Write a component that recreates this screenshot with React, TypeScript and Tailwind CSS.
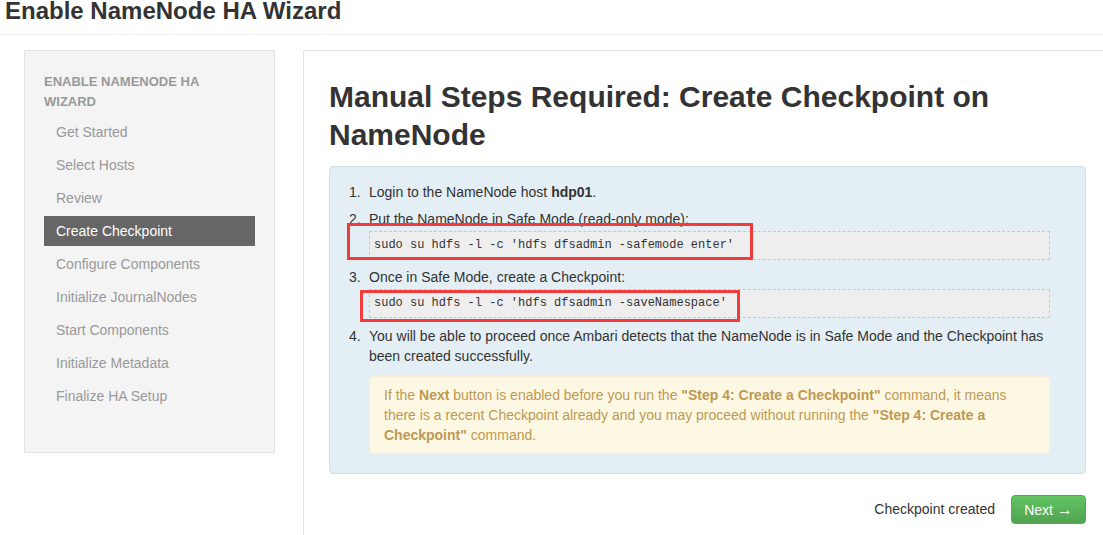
const steps = [
  'Get Started',
  'Select Hosts',
  'Review',
  'Create Checkpoint',
  'Configure Components',
  'Initialize JournalNodes',
  'Start Components',
  'Initialize Metadata',
  'Finalize HA Setup',
];

function CodeLine({ cmd, box }: { cmd: string; box: string }) {
  return (
    <div className="relative mt-[2px] border border-dashed border-[#c8c8c8] bg-[#eeeeee] px-[4px] py-[7px] font-['Liberation_Mono',monospace] text-[12px] leading-[13px] text-[#333]">
      {cmd}
      <div className={'absolute border-[3px] border-[#f23b3b] ' + box} />
    </div>
  );
}

export default function App() {
  return (
    <div className="min-h-[535px] w-full overflow-hidden bg-white font-['Liberation_Sans',Arial,sans-serif] text-[14px] text-[#333]">
      <div className="flex h-[35px] items-start border-b border-[#eeeeee] pl-[5px]">
        <h1 className="-mt-[3px] text-[24px] font-bold leading-[28px] text-[#333]">Enable NameNode HA Wizard</h1>
      </div>

      <div className="flex pt-[15px] pl-[24px]">
        <div className="h-[403px] w-[251px] shrink-0 border border-[#e3e3e3] bg-[#f4f4f4] px-[19px] pt-[21px]">
          <div className="mb-[5px] w-[190px] text-[13px] font-bold uppercase leading-[20px] text-[#999]">
            Enable NameNode HA Wizard
          </div>
          <div className="flex flex-col gap-[3px]">
            {steps.map((s) => (
              <div
                key={s}
                className={
                  s === 'Create Checkpoint'
                    ? 'h-[30px] bg-[#666] pl-[12px] leading-[30px] text-white'
                    : 'h-[30px] pl-[12px] leading-[30px] text-[#999]'
                }
              >
                {s}
              </div>
            ))}
          </div>
        </div>

        <div className="ml-[28px] min-h-[485px] flex-1 border-t border-l border-[#e3e3e3] pl-[25px] pr-[16px] pt-[27px]">
          <h2 className="text-[30px] font-bold leading-[38px] text-[#333]">
            Manual Steps Required: Create Checkpoint on NameNode
          </h2>

          <div className="mt-[12px] w-[757px] rounded-[4px] border border-[#d3dfe6] bg-[#e4eff5] pt-[15px] pb-[19px] pl-[19px] pr-[35px] leading-[20px]">
            <div className="flex">
              <span className="w-[20px] shrink-0">1.</span>
              <span>
                Login to the NameNode host <b>hdp01</b>.
              </span>
            </div>

            <div className="mt-[7px] flex">
              <span className="w-[20px] shrink-0">2.</span>
              <div className="flex-1">
                <div>Put the NameNode in Safe Mode (read-only mode):</div>
                <CodeLine cmd="sudo su hdfs -l -c 'hdfs dfsadmin -safemode enter'" box="-left-[23px] -top-[9px] h-[37px] w-[406px]" />
              </div>
            </div>

            <div className="mt-[7px] flex">
              <span className="w-[20px] shrink-0">3.</span>
              <div className="flex-1">
                <div>Once in Safe Mode, create a Checkpoint:</div>
                <CodeLine cmd="sudo su hdfs -l -c 'hdfs dfsadmin -saveNamespace'" box="-left-[10px] top-[0px] h-[32px] w-[380px]" />
              </div>
            </div>

            <div className="mt-[8px] flex">
              <span className="w-[20px] shrink-0">4.</span>
              <div className="flex-1">
                <div>
                  You will be able to proceed once Ambari detects that the NameNode is in Safe Mode and the Checkpoint has
                  been created successfully.
                </div>
                <div className="mt-[10px] rounded-[4px] border border-[#fbeed5] bg-[#fcf8e3] py-[8px] pl-[14px] pr-[35px] text-[#c09853]">
                  If the <b>Next</b> button is enabled before you run the <b>"Step 4: Create a Checkpoint"</b> command, it means
                  there is a recent Checkpoint already and you may proceed without running the <b>"Step 4: Create a Checkpoint"</b>{' '}
                  command.
                </div>
              </div>
            </div>
          </div>

          <div className="mt-[21px] flex w-[757px] items-center justify-end">
            <span className="mr-[16px]">Checkpoint created</span>
            <button className="h-[29px] w-[75px] rounded-[4px] border border-[#4cae4c] bg-gradient-to-b from-[#62c462] to-[#51a351] text-[14px] text-white">
              Next <span className="text-[16px]">→</span>
            </button>
          </div>
        </div>
      </div>
    </div>
  );
}
